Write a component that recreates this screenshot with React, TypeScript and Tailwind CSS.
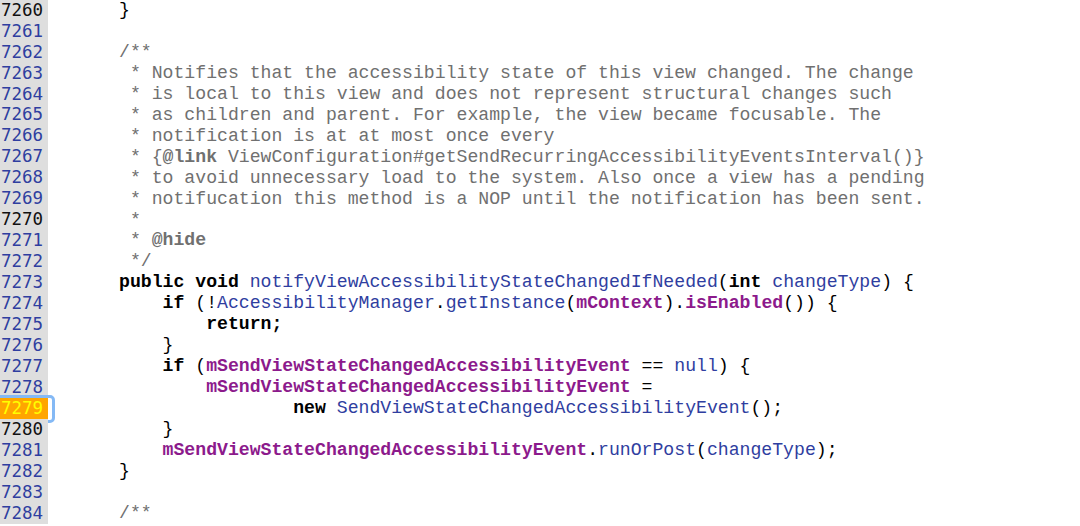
type Tok = [string, string?];

const C = "text-[#707070]";
const CB = "text-[#707070] font-bold";
const K = "text-black font-bold";
const B = "text-[#2f3ea0]";
const P = "text-[#8c1a8c] font-bold";
const T = "text-black";

const lines: Tok[][] = [
  [["    }", T]],
  [],
  [["    /**", C]],
  [["     * Notifies that the accessibility state of this view changed. The change", C]],
  [["     * is local to this view and does not represent structural changes such", C]],
  [["     * as children and parent. For example, the view became focusable. The", C]],
  [["     * notification is at at most once every", C]],
  [["     * {", C], ["@link", CB], [" ViewConfiguration#getSendRecurringAccessibilityEventsInterval()}", C]],
  [["     * to avoid unnecessary load to the system. Also once a view has a pending", C]],
  [["     * notifucation this method is a NOP until the notification has been sent.", C]],
  [["     *", C]],
  [["     * ", C], ["@hide", CB]],
  [["     */", C]],
  [["    public void ", K], ["notifyViewAccessibilityStateChangedIfNeeded", B], ["(", T], ["int", K], [" ", T], ["changeType", B], [") {", T]],
  [["        if", K], [" (!", T], ["AccessibilityManager", B], [".", T], ["getInstance", B], ["(", T], ["mContext", P], [").", T], ["isEnabled", P], ["()) {", T]],
  [["            return;", K]],
  [["        }", T]],
  [["        if", K], [" (", T], ["mSendViewStateChangedAccessibilityEvent", P], [" == ", T], ["null", B], [") {", T]],
  [["            mSendViewStateChangedAccessibilityEvent", P], [" =", T]],
  [["                    new", K], [" ", T], ["SendViewStateChangedAccessibilityEvent", B], ["();", T]],
  [["        }", T]],
  [["        mSendViewStateChangedAccessibilityEvent", P], [".", T], ["runOrPost", B], ["(", T], ["changeType", B], [");", T]],
  [["    }", T]],
  [],
  [["    /**", C]],
];

const FIRST = 7260;
const CURRENT = 7279;

export default function App() {
  return (
    <div className="w-[1080px] h-[526px] overflow-hidden bg-white flex flex-col">
      {lines.map((toks, i) => {
        const n = FIRST + i;
        const cur = n === CURRENT;
        const numColor = cur ? "text-[#ffff00]" : n % 10 === 0 ? "text-[#111111]" : "text-[#2f3ea0]";
        return (
          <div key={n} className="flex h-[20.96px] shrink-0">
            <div className="relative w-[48px] shrink-0 bg-[#dedede]">
              {cur && (
                <div className="absolute left-[-4px] right-[-7px] top-[-3px] bottom-[-4px] rounded-[5px] border-[3px] border-[#84b9f5]" />
              )}
              <div
                className={`relative h-full flex items-center pl-[1px] text-[17.5px] leading-none font-['DejaVu_Sans_Mono',monospace] ${numColor} ${cur ? "bg-[#ffa500]" : ""}`}
              >
                {n}
              </div>
            </div>
            <div className="pl-[27.5px] whitespace-pre text-[18.15px] leading-[20.96px] font-['Liberation_Mono',monospace]">
              {toks.map(([s, cls], j) => (
                <span key={j} className={cls}>
                  {s}
                </span>
              ))}
            </div>
          </div>
        );
      })}
    </div>
  );
}
